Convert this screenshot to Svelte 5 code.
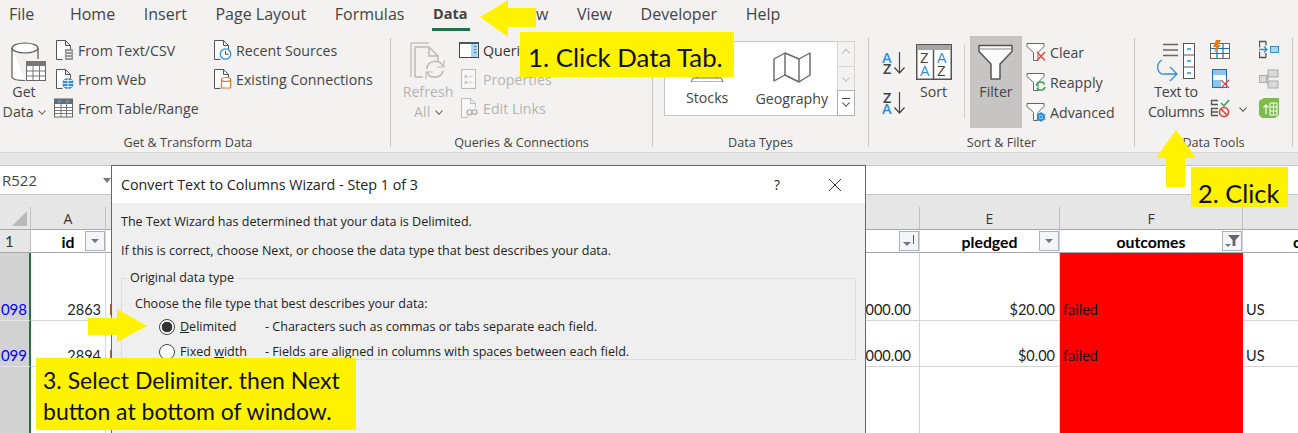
<script lang="ts">
  const PAGE = 'M2.5 19.5V.5h9l5 5v4M11.5.5v5h5M2.5 19.5h6';
  const FUNNEL = 'M1 1.500h17v3l-6 6v8H7.500v-8l-6.500-6z';
  const tabs = ['Home', 'Insert', 'Page Layout', 'Formulas', 'Data', 'Review', 'View', 'Developer', 'Help'];
</script>

<div class="app">
  <header class="ribbon">
    <nav class="tabs">
      <span class="tab file">File</span>
      {#each tabs as tab}
        <span class="tab" class:active={tab === 'Data'}>{tab}</span>
      {/each}
    </nav>

    <div class="groups">
      <section class="group g-get">
        <div class="body">
          <div class="big get-data">
            <svg width="36" height="40" viewBox="0 0 36 40">
              <path d="M1 6v29c0 2 5 3.500 13 3.500M27 6v11" fill="#fff" stroke="#555" stroke-width="1.200" />
              <ellipse cx="14" cy="6" rx="13" ry="5" fill="#fff" stroke="#555" stroke-width="1.200" />
              <rect x="15.500" y="19.500" width="19" height="19" fill="#fff" stroke="#666" />
              <rect x="15" y="19" width="20" height="5" fill="#777" />
              <path d="M15.500 29h19M15.500 34h19M22 24v14M28.500 24v14" stroke="#777" fill="none" />
            </svg>
            <span>Get</span>
            <span>Data <i class="chev"></i></span>
          </div>
          <ul class="list first">
            <li>
              <svg class="ic" viewBox="0 0 20 20"><path d={PAGE} fill="#fff" stroke="#555" /><rect x="11" y="9" width="8" height="11" fill="#999" /><path d="M12.500 11.500h5M12.500 14.500h5M12.500 17.500h5" stroke="#eee" /></svg>
              From Text/CSV
            </li>
            <li>
              <svg class="ic" viewBox="0 0 20 20"><path d={PAGE} fill="#fff" stroke="#555" /><circle cx="14" cy="14.500" r="5.500" fill="#2e8fd6" /><path d="M8.500 14.500h11M14 9v11M10 11.500h8M10 17.500h8" stroke="#fff" stroke-width=".8" fill="none" /></svg>
              From Web
            </li>
            <li>
              <svg class="ic" viewBox="0 0 20 20"><rect x=".5" y="1" width="18" height="18" fill="#fff" stroke="#666" /><rect x="1" y="1" width="17" height="5" fill="#6a6a6a" /><path d="M3 2.500h5l-2.500 3zM11 2.500h5l-2.500 3z" fill="#3fa4e6" /><path d="M1 9.500h17M1 12.500h17M1 15.500h17M7 6v13M12.500 6v13" stroke="#777" /></svg>
              From Table/Range
            </li>
          </ul>
          <ul class="list second">
            <li>
              <svg class="ic" viewBox="0 0 20 20"><path d={PAGE} fill="#fff" stroke="#555" /><circle cx="13.500" cy="14" r="5.200" fill="#fff" stroke="#2e8fd6" stroke-width="1.300" /><path d="M13.500 11v3.300h3" stroke="#444" fill="none" /></svg>
              Recent Sources
            </li>
            <li>
              <svg class="ic" viewBox="0 0 20 20"><path d={PAGE} fill="#fff" stroke="#555" /><path d="M9.500 10.500v8.500h9v-8.500" fill="#fff" stroke="#e8791f" stroke-width="1.200" /><ellipse cx="14" cy="10.500" rx="4.500" ry="2" fill="#fff" stroke="#e8791f" stroke-width="1.200" /></svg>
              Existing Connections
            </li>
          </ul>
        </div>
        <div class="label">Get &amp; Transform Data</div>
      </section>

      <section class="group g-queries">
        <div class="body">
          <div class="big refresh muted">
            <svg width="36" height="40" viewBox="0 0 36 40">
              <path d="M1 35V1h18" fill="none" stroke="#c4c4c4" stroke-width="1.500" />
              <path d="M5 35V5h14l9 9v5M19 5v9h9M5 35h8" fill="none" stroke="#bbb" stroke-width="1.500" />
              <path d="M17 27c0-9 13-10 16-3M33 29c-2 8-14 8-16 1" fill="none" stroke="#bbb" stroke-width="1.600" />
              <path d="M34 18v7h-7M16 37v-7h7" fill="none" stroke="#bbb" stroke-width="1.200" />
            </svg>
            <span>Refresh</span>
            <span>All <i class="chev"></i></span>
          </div>
          <ul class="list queries">
            <li class="dark">
              <svg class="ic" viewBox="0 0 20 20"><rect x=".5" y="2.500" width="19" height="15" fill="#fff" stroke="#444" /><rect x="1" y="2" width="18" height="2" fill="#555" /><rect x="12" y="4" width="6.500" height="13" fill="#a9d5f2" /><path d="M15 6.500h2.500M15 9.500h2.500M15 12.500h2.500" stroke="#2e8fd6" /></svg>
              Queries &amp; Connections
            </li>
            <li class="muted">
              <svg class="ic" viewBox="0 0 20 20"><rect x="2.500" y=".5" width="14" height="19" fill="#f7f7f7" stroke="#bbb" /><path d="M5.500 6h3v3h-3zM5.500 12h3v3h-3z" fill="#ccc" /><path d="M10 7.500h4M10 13.500h4" stroke="#ccc" /></svg>
              Properties
            </li>
            <li class="muted">
              <svg class="ic" viewBox="0 0 20 20"><path d={PAGE} fill="#f7f7f7" stroke="#bbb" /><path d="M8 14c0-3 5-3 5 0s5 3 5 0-5-3-5 0-5 5-5 0z" fill="none" stroke="#aaa" stroke-width="1.200" /></svg>
              Edit Links
            </li>
          </ul>
        </div>
        <div class="label">Queries &amp; Connections</div>
      </section>

      <section class="group g-types">
        <div class="body">
          <div class="gallery">
            <div class="type stocks">
              <svg width="36" height="30" viewBox="0 0 36 30"><path d="M2 30l2-4h28l2 4z" fill="#fff" stroke="#666" /><path d="M8 26V6h20v20" fill="none" stroke="#666" /></svg>
              <span>Stocks</span>
            </div>
            <div class="type geo">
              <svg width="38" height="31" viewBox="0 0 38 31"><path d="M1 29V7l11-6 14 6 11-6v22l-11 7-14-7z" fill="#fff" stroke="#666" stroke-width="1.400" stroke-linejoin="round" /><path d="M12 1v22M26 7v23" stroke="#666" stroke-width="1.400" /></svg>
              <span>Geography</span>
            </div>
          </div>
          <div class="scroll">
            <span class="up"><i class="chev flip"></i></span>
            <span class="down"><i class="chev"></i></span>
            <span class="more"><b></b><i class="chev dark"></i></span>
          </div>
        </div>
        <div class="label">Data Types</div>
      </section>

      <section class="group g-sort">
        <div class="body">
          <div class="az">
            <svg width="24" height="26" viewBox="0 0 24 26">
              <text x="0" y="12" class="ltr blue">A</text><text x="1" y="23" class="ltr">Z</text>
              <path d="M17.500 1v21M12.500 16.500l5 5.500 5-5.500" fill="none" stroke="#444" stroke-width="1.200" />
            </svg>
            <svg width="24" height="26" viewBox="0 0 24 26">
              <text x="1" y="12" class="ltr">Z</text><text x="0" y="23" class="ltr blue">A</text>
              <path d="M17.500 1v21M12.500 16.500l5 5.500 5-5.500" fill="none" stroke="#444" stroke-width="1.200" />
            </svg>
          </div>
          <div class="big sort">
            <svg width="36" height="36" viewBox="0 0 36 36">
              <rect x=".75" y=".75" width="34.500" height="34.500" fill="#fff" stroke="#555" stroke-width="1.500" />
              <rect x="1" y="1" width="34" height="5" fill="#a5a5a5" />
              <path d="M17.500 6v29" stroke="#555" stroke-width="1.500" />
              <text x="4" y="19" class="ltr big-ltr">Z</text><text x="4" y="32" class="ltr big-ltr blue">A</text>
              <text x="21" y="19" class="ltr big-ltr blue">A</text><text x="21" y="32" class="ltr big-ltr">Z</text>
            </svg>
            <span>Sort</span>
          </div>
          <i class="divider"></i>
          <div class="big filter">
            <svg width="36" height="36" viewBox="0 0 36 36"><path d="M1 1.500h33v6L22 20v15h-9V20L1 7.500z" fill="#fbfbfb" stroke="#555" stroke-width="1.500" stroke-linejoin="round" /><path d="M1 5h33" stroke="#888" /></svg>
            <span>Filter</span>
          </div>
          <ul class="list filters">
            <li>
              <svg class="ic" viewBox="0 0 20 20"><path d={FUNNEL} fill="#fff" stroke="#666" /><path d="M11 10l8 8.500M19 10l-8 8.500" stroke="#e8413b" stroke-width="1.300" /></svg>
              Clear
            </li>
            <li>
              <svg class="ic" viewBox="0 0 20 20"><path d={FUNNEL} fill="#fff" stroke="#666" /><path d="M10.500 14c0-5 7-5 8-1.500M19 15c-1 4-7 4-8 1" fill="none" stroke="#2fa35a" stroke-width="1.500" /></svg>
              Reapply
            </li>
            <li>
              <svg class="ic" viewBox="0 0 20 20"><path d={FUNNEL} fill="#fff" stroke="#666" /><circle cx="15" cy="15" r="3.200" fill="none" stroke="#2e8fd6" stroke-width="2" /><path d="M15 10v10M10.500 12.500l9 5M10.500 17.500l9-5" stroke="#2e8fd6" /></svg>
              Advanced
            </li>
          </ul>
        </div>
        <div class="label">Sort &amp; Filter</div>
      </section>

      <section class="group g-tools">
        <div class="body">
          <div class="big columns">
            <svg width="40" height="38" viewBox="0 0 40 38">
              <path d="M7 1.500h15M7 7h15M7 12.500h15" stroke="#666" stroke-width="1.300" />
              <rect x="27.500" y=".5" width="11" height="35" fill="#fff" stroke="#555" />
              <path d="M27.500 12h11M27.500 24h11" stroke="#555" />
              <path d="M31 6h4M31 18h4M31 30h4" stroke="#2e8fd6" stroke-width="1.300" />
              <path d="M6 17c-7 4-5 15 3 14h11M14 24l7 7-7 7" fill="none" stroke="#2e8fd6" stroke-width="1.300" />
            </svg>
            <span>Text to</span>
            <span>Columns</span>
          </div>
          <div class="tool-col">
            <svg class="ic" viewBox="0 0 20 20"><rect x=".5" y="3.500" width="19" height="15" fill="#fff" stroke="#666" /><path d="M1 8.500h18M1 13.500h18M7 4v14M13 4v14" stroke="#1b6fb8" stroke-width="1.200" /><path d="M6 0h5L8 5h3l-7 8 2-6H3z" fill="#e8791f" /></svg>
            <svg class="ic" viewBox="0 0 20 20"><rect x="2.500" y=".5" width="14" height="18" fill="#fff" stroke="#1b6fb8" /><rect x="3" y="1" width="13" height="5" fill="#8ec4ea" /><rect x="3" y="11" width="8" height="7" fill="#8ec4ea" /><path d="M11 11l8 8M19 11l-8 8" stroke="#e8413b" stroke-width="1.300" /></svg>
            <svg class="ic" viewBox="0 0 20 20"><path d="M8 2.500H1.500v4H8M8 10.500H1.500v7H8M1.500 14H8" fill="none" stroke="#555" stroke-width="1.300" /><path d="M11 5l3 3 5-6" fill="none" stroke="#2fa35a" stroke-width="1.500" /><circle cx="14" cy="14" r="4.500" fill="none" stroke="#e8413b" stroke-width="1.600" /><path d="M10.800 10.800l6.400 6.400" stroke="#e8413b" stroke-width="1.600" /></svg>
          </div>
          <i class="chev tool-chev"></i>
          <div class="tool-col">
            <svg class="ic" viewBox="0 0 20 20"><path d="M7 1.500H.5v6M.5 11.500v6H7M7 1.500v4M7 13v4.500" fill="none" stroke="#555" stroke-width="1.300" /><path d="M0 9.500h8M5 6.500l3 3-3 3" fill="none" stroke="#2e8fd6" stroke-width="1.300" /><rect x="11.500" y="6.500" width="8" height="6" fill="#a9d5f2" stroke="#2e8fd6" /></svg>
            <svg class="ic" viewBox="0 0 20 20"><rect x="9" y="1" width="10" height="7" fill="#d8d8d8" stroke="#aaa" /><rect x="9" y="12" width="10" height="7" fill="#d8d8d8" stroke="#aaa" /><rect x=".5" y="6.500" width="7" height="7" fill="#d8d8d8" stroke="#aaa" /><path d="M7.500 10H9V4.500M9 10v5.500" fill="none" stroke="#aaa" /></svg>
            <svg class="ic" viewBox="0 0 20 20"><path d="M0 3l5-3h15v17l-4 3H3l-3-3z" fill="#7dbb4d" /><path d="M11 5h7v12h-7zM11 9h7M11 13h7M14.500 5v12" fill="none" stroke="#fff" /><path d="M7 16V7M4.500 9.500L7 7l2.500 2.500" fill="none" stroke="#fff" stroke-width="1.200" /></svg>
          </div>
        </div>
        <div class="label">Data Tools</div>
      </section>
    </div>
  </header>

  <div class="strip"></div>

  <div class="formula">
    <span class="name">R522</span>
    <i class="name-arrow"></i>
  </div>

  <div class="sheet">
    <div class="topgap"></div>
    <div class="grid">
      <div class="corner"><i></i></div>
      <div class="col">A</div>
      <div class="col"></div>
      <div class="col">E</div>
      <div class="col">F</div>
      <div class="col last"></div>

      <div class="rowh first-row">1</div>
      <div class="cell head">id<i class="fbtn"></i></div>
      <div class="cell head"><i class="fbtn sorted"></i></div>
      <div class="cell head">pledged<i class="fbtn"></i></div>
      <div class="cell head">outcomes<i class="fbtn filtered"></i></div>
      <div class="cell head clip last">country</div>

      <div class="rowh link">1098</div>
      <div class="cell num">2863</div>
      <div class="cell num amount"><span class="over">Br</span>$5,000.00</div>
      <div class="cell num">$20.00</div>
      <div class="cell bad">failed</div>
      <div class="cell text last">US</div>

      <div class="rowh link">1099</div>
      <div class="cell num">2894</div>
      <div class="cell num amount"><span class="over">Br</span>$5,000.00</div>
      <div class="cell num">$0.00</div>
      <div class="cell bad">failed</div>
      <div class="cell text last">US</div>

      <div class="rowh"></div>
      <div class="cell"></div>
      <div class="cell"></div>
      <div class="cell"></div>
      <div class="cell bad"></div>
      <div class="cell last"></div>
    </div>
  </div>

  <div class="dialog">
    <div class="titlebar">
      <span class="title">Convert Text to Columns Wizard - Step 1 of 3</span>
      <span class="help">?</span>
      <svg class="close" width="14" height="14" viewBox="0 0 14 14"><path d="M1 1l12 12M13 1L1 13" stroke="#333" fill="none" /></svg>
    </div>
    <div class="dlg-body">
      <p>The Text Wizard has determined that your data is Delimited.</p>
      <p>If this is correct, choose Next, or choose the data type that best describes your data.</p>
      <fieldset>
        <legend>Original data type</legend>
        <div class="prompt">Choose the file type that best describes your data:</div>
        <div class="option">
          <i class="radio on"></i>
          <span><u>D</u>elimited</span>
          <span>- Characters such as commas or tabs separate each field.</span>
        </div>
        <div class="option">
          <i class="radio"></i>
          <span>Fixed <u>w</u>idth</span>
          <span>- Fields are aligned in columns with spaces between each field.</span>
        </div>
      </fieldset>
    </div>
  </div>

  <svg class="arrow a1" width="56" height="37" viewBox="0 0 56 37"><path d="M0 17L28 0v8h28v19H28v10z" /></svg>
  <svg class="arrow a2" width="40" height="57" viewBox="0 0 40 57"><path d="M20 0l20 28H29v29H10V28H0z" /></svg>
  <svg class="arrow a3" width="59" height="33" viewBox="0 0 59 33"><path d="M0 9h29V0l30 17-30 16v-7H0z" /></svg>

  <div class="note n1">1. Click Data Tab.</div>
  <div class="note n2">2. Click</div>
  <div class="note n3">3. Select Delimiter. then Next<br />button at bottom of window.</div>
</div>

<style>
  :global(body) {
    margin: 0;
    background: #fff;
  }

  .app {
    position: relative;
    width: 1298px;
    height: 433px;
    overflow: hidden;
    font-family: "Open Sans", "Noto Sans", sans-serif;
    color: #444;
  }

  .ribbon {
    height: 152px;
    background: #f3f2f1;
    border-bottom: 1px solid #d4d4d4;
  }

  .tabs {
    display: flex;
    gap: 28.600px;
    height: 38px;
    padding-left: 9px;
    font-size: 16px;
  }

  .tab {
    position: relative;
    line-height: 28px;
    white-space: nowrap;
  }

  .tab.file {
    margin-right: 7px;
  }

  .tab.active {
    font-weight: 700;
    font-size: 14.500px;
  }

  .tab.active::after {
    content: '';
    position: absolute;
    left: -1px;
    right: -2px;
    top: 28px;
    height: 3px;
    background: #217346;
  }

  .groups {
    display: flex;
    height: 109px;
  }

  .group {
    display: flex;
    flex-direction: column;
    box-sizing: border-box;
    border-right: 1px solid #c8c6c4;
    font-size: 14.200px;
  }

  .g-get { width: 391px; }
  .g-queries { width: 262px; }
  .g-types { width: 216px; }
  .g-sort { width: 266px; }
  .g-tools { width: 158px; }

  .g-get .label {
    padding-right: 14px;
  }

  .body {
    display: flex;
    flex: 1;
    min-height: 0;
  }

  .label {
    height: 12px;
    text-align: center;
    font-size: 12.600px;
    line-height: 15px;
  }

  .big {
    display: flex;
    flex-direction: column;
    align-items: center;
    line-height: 20px;
    white-space: nowrap;
  }

  .big svg {
    height: 44px;
    flex: none;
    padding-top: 4px;
    box-sizing: border-box;
    overflow: visible;
  }

  .chev {
    display: inline-block;
    width: 5px;
    height: 5px;
    margin: 0 0 3px 2px;
    border-right: 1.200px solid #555;
    border-bottom: 1.200px solid #555;
    transform: rotate(45deg) scale(0.9);
  }

  .chev.flip {
    transform: rotate(225deg);
    margin-top: 3px;
  }

  .list {
    list-style: none;
    margin: 0;
    padding: 0;
    display: flex;
    flex-direction: column;
    gap: 5px;
  }

  .list li {
    display: flex;
    align-items: center;
    gap: 4px;
    height: 24px;
    white-space: nowrap;
  }

  .ic {
    width: 20px;
    height: 20px;
    flex: none;
  }

  .muted {
    color: #b4b4b4;
  }

  .dark {
    color: #333;
  }

  .get-data {
    width: 46px;
    flex: none;
    padding-left: 2px;
    box-sizing: border-box;
  }

  .get-data svg {
    width: 36px;
    margin-left: 9px;
    align-self: flex-start;
  }

  .list.first {
    margin-left: 8px;
    width: 158px;
  }

  .g-queries .body {
    padding-left: 20px;
  }

  .refresh {
    width: 34px;
    flex: none;
  }

  .list.queries {
    margin-left: 14px;
  }

  .g-types .body {
    padding: 3px 0 0 11px;
  }

  .gallery {
    display: flex;
    width: 173px;
    height: 75px;
    box-sizing: border-box;
    background: #fff;
    border: 1px solid #c8c6c4;
    border-right: 0;
    gap: 27px;
    padding-left: 21px;
  }

  .type {
    display: flex;
    flex-direction: column;
    align-items: center;
    line-height: 20px;
  }

  .type svg {
    margin-top: 10px;
    margin-bottom: 6px;
    flex: none;
  }

  .scroll {
    display: flex;
    flex-direction: column;
    width: 18px;
    height: 75px;
  }

  .scroll span {
    display: flex;
    flex-direction: column;
    align-items: center;
    justify-content: center;
    flex: 1;
    border: 1px solid #d5d5d5;
    margin-bottom: -1px;
  }

  .scroll .more {
    background: #fff;
    border-color: #b0b0b0;
    margin: 0;
  }

  .scroll .more b {
    width: 8px;
    height: 1px;
    background: #444;
    margin-bottom: 1px;
  }

  .scroll .chev {
    margin: 0 0 2px;
    border-color: #bbb;
  }

  .scroll .more .chev {
    border-color: #444;
  }

  .g-sort .body {
    padding-left: 13px;
  }

  .az {
    display: flex;
    flex-direction: column;
    gap: 14px;
    padding-top: 13px;
    width: 24px;
    flex: none;
  }

  .ltr {
    font-size: 14.500px;
    font-weight: 600;
    fill: #444;
  }

  .blue {
    fill: #2e8fd6;
  }

  .big-ltr {
    font-size: 15px;
    font-weight: 400;
  }

  .sort {
    margin-left: 9px;
    width: 37px;
  }

  .divider {
    width: 1px;
    height: 73px;
    margin: 7px 5px 0 12px;
    background: #d2d0ce;
  }

  .filter {
    width: 52px;
    height: 92px;
    margin-top: -2px;
    background: #c6c5c3;
    flex: none;
    padding-top: 2px;
    box-sizing: border-box;
  }

  .list.filters {
    margin-left: 4px;
    gap: 6px;
    padding-top: 2px;
  }

  .g-tools .body {
    padding-left: 18px;
  }

  .columns {
    width: 46px;
    letter-spacing: -0.300px;
  }

  .tool-col {
    display: flex;
    flex-direction: column;
    gap: 9px;
    padding-top: 2px;
    margin-left: 11px;
  }

  .tool-chev {
    align-self: flex-start;
    margin: 67px 0 0 10px;
    border-color: #444;
  }

  .tool-chev + .tool-col {
    margin-left: 13px;
  }

  .strip {
    height: 12px;
    background: #e6e6e6;
  }

  .formula {
    display: flex;
    align-items: center;
    justify-content: space-between;
    height: 28px;
    padding: 0 1187px 0 2px;
    background: #fff;
    border-top: 1px solid #c6c6c6;
    border-bottom: 1px solid #c6c6c6;
    font-size: 15px;
  }

  .name-arrow {
    border: 4px solid transparent;
    border-top: 5px solid #777;
    border-bottom: 0;
  }

  .topgap {
    height: 12px;
    background: #e6e6e6;
  }

  .grid {
    display: grid;
    grid-template-columns: 31px 75px 814px 140px 183px 55px;
    grid-template-rows: 23px 23px 68px 46px 67px;
    font-family: Lato, "Liberation Sans", sans-serif;
    font-size: 14.500px;
    color: #222;
  }

  .col {
    display: flex;
    align-items: center;
    justify-content: center;
    background: #e6e6e6;
    border-right: 1px solid #c0c0c0;
    border-bottom: 1px solid #a8a8a8;
    font-family: "Open Sans", sans-serif;
    font-size: 14px;
    color: #333;
  }

  .corner {
    position: relative;
    background: #e6e6e6;
    border-right: 1px solid #c0c0c0;
    border-bottom: 1px solid #a8a8a8;
  }

  .corner i {
    position: absolute;
    left: 12px;
    bottom: 3px;
    border-left: 15px solid transparent;
    border-bottom: 15px solid #b9b9b9;
  }

  .rowh {
    overflow: hidden;
    background: #d2d2d2;
    border-right: 2px solid #217346;
    border-bottom: 1px solid #e6e6e6;
    display: flex;
    align-items: flex-end;
    justify-content: flex-end;
    padding: 0 2px 2px 0;
    font-size: 15px;
    min-width: 0;
  }

  .rowh.first-row {
    justify-content: flex-start;
    align-items: center;
    background: #e6e6e6;
    padding: 0 0 0 5px;
    border-right: 1px solid #c0c0c0;
    border-bottom: 1px solid #a8a8a8;
    color: #333;
  }

  .rowh.link {
    color: #0000ff;
  }

  .cell {
    position: relative;
    min-width: 0;
    display: flex;
    align-items: flex-end;
    padding: 0 4px 2px;
    background: #fff;
    border-right: 1px solid #d4d4d4;
    border-bottom: 1px solid #d4d4d4;
    box-sizing: border-box;
    white-space: nowrap;
  }

  .cell.head {
    align-items: center;
    justify-content: center;
    padding: 0;
    font-size: 15.800px;
    font-weight: 700;
    color: #000;
    border-bottom: 1px solid #a8a8a8;
  }

  .clip {
    overflow: hidden;
    justify-content: flex-start !important;
    padding-left: 50px !important;
  }

  .cell.num {
    justify-content: flex-end;
  }

  .cell.amount {
    padding-right: 8px;
  }

  .over {
    position: absolute;
    left: 3px;
  }

  .cell.bad {
    background: #ff0000;
    border-color: #ff0000;
    color: #111;
    padding-left: 3px;
  }

  .cell.text {
    padding-left: 3px;
  }

  .last {
    border-right: 0;
  }

  .fbtn {
    position: absolute;
    right: 0;
    top: 1px;
    width: 20px;
    height: 20px;
    box-sizing: border-box;
    background: #f3f5f9;
    border: 1px solid #a9b2bf;
  }

  .fbtn::after {
    content: '';
    position: absolute;
    left: 5px;
    top: 7px;
    border: 4px solid transparent;
    border-top: 4px solid #777;
    border-bottom: 0;
  }

  .fbtn.sorted::after {
    left: 3px;
    top: 10px;
  }

  .fbtn.sorted::before {
    content: '';
    position: absolute;
    left: 13px;
    top: 3px;
    width: 1px;
    height: 9px;
    background: #555;
  }

  .fbtn.filtered::after {
    left: 2px;
    top: 12px;
    border-width: 3px;
    border-top: 3px solid #777;
    border-bottom: 0;
  }

  .fbtn.filtered::before {
    content: '';
    position: absolute;
    left: 5px;
    top: 3px;
    width: 12px;
    height: 11px;
    background: #666;
    clip-path: polygon(0 0, 100% 0, 62% 45%, 62% 100%, 38% 100%, 38% 45%);
  }

  .dialog {
    position: absolute;
    left: 111px;
    top: 165px;
    width: 755px;
    height: 290px;
    box-sizing: border-box;
    background: #efefef;
    border: 1px solid #666;
    font-size: 12.550px;
    color: #222;
  }

  .titlebar {
    position: relative;
    display: flex;
    align-items: center;
    height: 37px;
    padding-left: 9px;
    background: #fff;
    font-size: 14.300px;
  }

  .title {
    flex: 1;
  }

  .help {
    font-size: 14px;
    margin-right: 48px;
  }

  .close {
    margin-right: 23px;
  }

  .dlg-body {
    padding: 9px 9px 8px;
  }

  .dlg-body p {
    margin: 0 0 9px;
    line-height: 20px;
    white-space: nowrap;
  }

  fieldset {
    margin: 9px 0 0;
    padding: 0 0 5px 13px;
    border: 1px solid #dcdcdc;
    height: 90px;
    box-sizing: border-box;
  }

  legend {
    margin-left: -8px;
    padding: 0 3px;
    line-height: 16px;
  }

  .prompt {
    line-height: 20px;
    margin-top: 8px;
  }

  .option {
    display: grid;
    grid-template-columns: 21px 85px 1fr;
    align-items: center;
    height: 25px;
    margin-left: 24px;
    white-space: nowrap;
  }

  .radio {
    width: 16px;
    height: 16px;
    box-sizing: border-box;
    border: 1px solid #444;
    border-radius: 50%;
    background: #fff;
  }

  .radio.on {
    background: radial-gradient(circle, #333 0 5px, #fff 5.600px);
  }

  .arrow {
    position: absolute;
    fill: #fff200;
  }

  .a1 { left: 480px; top: 0; }
  .a2 { left: 1156px; top: 130px; }
  .a3 { left: 88px; top: 309px; }

  .note {
    position: absolute;
    box-sizing: border-box;
    background: #fff200;
    color: #111;
    font-family: Lato, "Liberation Sans", sans-serif;
    font-size: 25.800px;
    white-space: nowrap;
  }

  .n1 {
    left: 520px;
    top: 32px;
    width: 214px;
    height: 45px;
    padding-left: 8px;
    line-height: 50px;
  }

  .n2 {
    left: 1191px;
    top: 167px;
    width: 97px;
    height: 40px;
    padding-left: 7px;
    font-size: 25.400px;
    line-height: 52px;
  }

  .n3 {
    left: 36px;
    top: 358px;
    width: 320px;
    height: 72px;
    padding: 7px 0 0 7px;
    font-size: 23px;
    line-height: 31px;
  }
</style>
